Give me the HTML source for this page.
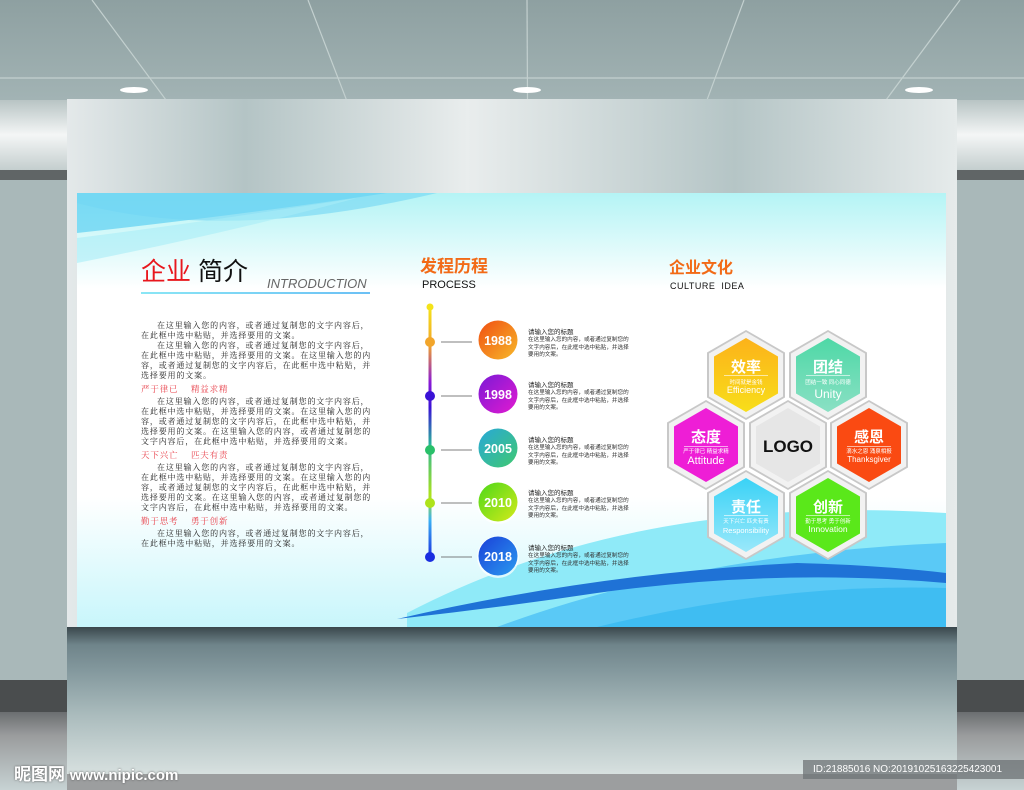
<!DOCTYPE html><html><head><meta charset="utf-8"><style>
*{margin:0;padding:0}
body{width:1024px;height:790px;overflow:hidden;position:relative;font-family:"Liberation Sans","Noto Sans CJK SC",sans-serif;background:#a7b6b7}
.abs{position:absolute}
.txt{font-family:"Liberation Sans","Noto Serif CJK SC","Noto Sans CJK SC",sans-serif;font-size:8px;letter-spacing:.85px;line-height:10px;color:#222;width:232px}
.txt p{text-indent:2em}
.red{color:#e8404a;font-size:8.5px;margin:3px 0 2px;line-height:11px}
.tl{font-size:5.6px;line-height:7.5px;color:#333;width:104px}
.tl b{font-size:6.5px;font-weight:normal;color:#222;display:block;line-height:9px}
</style></head><body>
<div class="abs" style="left:0;top:0;width:1024px;height:200px;background:linear-gradient(#8ea0a1,#a6b7b8 60%,#b9c6c6)"></div>
<svg class="abs" style="left:0;top:0" width="1024" height="790">
<g stroke="#c3d0cf" stroke-width="1.2" fill="none">
<line x1="92" y1="0" x2="240" y2="200"/><line x1="308" y1="0" x2="385" y2="200"/><line x1="527" y1="0" x2="528" y2="200"/><line x1="744" y1="0" x2="670" y2="200"/><line x1="960" y1="0" x2="812" y2="200"/>
<line x1="0" y1="110" x2="130" y2="200"/><line x1="1024" y1="118" x2="910" y2="200"/>
<line x1="0" y1="78" x2="1024" y2="78"/>
</g>
<ellipse cx="134" cy="90" rx="14" ry="3" fill="#fff"/><ellipse cx="527" cy="90" rx="14" ry="3" fill="#fff"/><ellipse cx="919" cy="90" rx="14" ry="3" fill="#fff"/>
</svg>
<div class="abs" style="left:0;top:100px;width:1024px;height:70px;background:linear-gradient(#b8c4c4,#f4f6f6 50%,#c4cece)"></div>
<div class="abs" style="left:0;top:170px;width:1024px;height:10px;background:#606566"></div>
<div class="abs" style="left:0;top:180px;width:1024px;height:500px;background:#a9b8b9"></div>
<div class="abs" style="left:0;top:680px;width:1024px;height:32px;background:#4a4d4e"></div>
<div class="abs" style="left:0;top:712px;width:1024px;height:78px;background:linear-gradient(#6b6e70,#9a9c9d 30%,#c7d2d3)"></div>
<div class="abs" style="left:67px;top:99px;width:890px;height:676px;background:linear-gradient(90deg,#e4e9ea,#b4c4c5 20%,#e9eded 45%,#b5c5c6 75%,#e6ebeb)"></div>
<div class="abs" style="left:67px;top:627px;width:890px;height:148px;background:linear-gradient(#3a474c,#6f848a 12%,#84999e 30%,#abbcbd 60%,#d8e1e0)"></div>
<div class="abs" style="left:67px;top:774px;width:890px;height:16px;background:#9c9e9f"></div>
<div class="abs" style="left:77px;top:193px;width:869px;height:434px;overflow:hidden;background:linear-gradient(#b4f4f5,#ffffff 22%,#ffffff 70%,#c8f6fb)">
<svg class="abs" style="left:0;top:0" width="869" height="434">
<path d="M0 0H310Q180 20 0 40Z" fill="#5ed0f2" opacity=".7"/>
<path d="M0 10Q150 50 360 0H0Z" fill="#72d6f4" opacity=".6"/>
<path d="M0 45Q120 30 280 5Q150 40 0 70Z" fill="#a8ecf6" opacity=".6"/>
<path d="M330 420Q560 300 869 320V434H330Z" fill="#8feaf8"/>
<path d="M420 434Q620 360 869 350V434Z" fill="#5ac9f6"/>
<path d="M320 426Q520 380 720 370Q800 372 869 380V390Q700 375 520 400Q420 415 320 426Z" fill="#1f72d6"/>
<path d="M520 434Q700 390 869 395V434Z" fill="#3fbdf2"/>
</svg>
<div class="abs" style="left:64px;top:64px;font-size:25px;line-height:30px;font-family:'Liberation Sans','Noto Sans CJK SC',sans-serif"><span style="color:#e8171d">企业</span> <span style="color:#111">简介</span></div>
<div class="abs" style="left:190px;top:83px;font-size:13px;font-style:italic;color:#666">INTRODUCTION</div>
<div class="abs" style="left:64px;top:99px;width:229px;height:2px;background:linear-gradient(90deg,#8ae6f5,#6bc0f5)"></div>
<div class="abs txt" style="left:64px;top:128px">
<p>在这里输入您的内容，或者通过复制您的文字内容后，在此框中选中粘贴，并选择要用的文案。</p>
<p>在这里输入您的内容，或者通过复制您的文字内容后，在此框中选中粘贴，并选择要用的文案。在这里输入您的内容，或者通过复制您的文字内容后，在此框中选中粘贴，并选择要用的文案。</p>
<div class="red">严于律已　 精益求精</div>
<p>在这里输入您的内容，或者通过复制您的文字内容后，在此框中选中粘贴，并选择要用的文案。在这里输入您的内容，或者通过复制您的文字内容后，在此框中选中粘贴，并选择要用的文案。在这里输入您的内容，或者通过复制您的文字内容后，在此框中选中粘贴，并选择要用的文案。</p>
<div class="red">天下兴亡　 匹夫有责</div>
<p>在这里输入您的内容，或者通过复制您的文字内容后，在此框中选中粘贴，并选择要用的文案。在这里输入您的内容，或者通过复制您的文字内容后，在此框中选中粘贴，并选择要用的文案。在这里输入您的内容，或者通过复制您的文字内容后，在此框中选中粘贴，并选择要用的文案。</p>
<div class="red">勤于思考　 勇于创新</div>
<p>在这里输入您的内容，或者通过复制您的文字内容后，在此框中选中粘贴，并选择要用的文案。</p>
</div>
<div class="abs" style="left:343px;top:59px;font-size:17px;font-weight:bold;color:#f26a16">发程历程</div>
<div class="abs" style="left:345px;top:86px;font-size:11px;color:#111">PROCESS</div>
<div class="abs" style="left:592px;top:61px;font-size:16px;font-weight:bold;color:#f26a16">企业文化</div>
<div class="abs" style="left:593px;top:88px;font-size:9px;color:#111;letter-spacing:.5px">CULTURE&nbsp; IDEA</div>
</div>
<svg class="abs" style="left:0;top:0" width="1024" height="790">
<defs>
<linearGradient id="tline" x1="0" y1="0" x2="0" y2="1"><stop offset="0" stop-color="#f4e31a"/><stop offset=".15" stop-color="#f2a52a"/><stop offset=".3" stop-color="#8a1ad6"/><stop offset=".4" stop-color="#3a12d6"/><stop offset=".55" stop-color="#2ab79a"/><stop offset=".75" stop-color="#aee31a"/><stop offset=".85" stop-color="#3ab0f4"/><stop offset="1" stop-color="#1a2ee0"/></linearGradient>
<linearGradient id="c1" x1="0" y1="0" x2="1" y2="1"><stop offset="0" stop-color="#f04e12"/><stop offset="1" stop-color="#f7b92a"/></linearGradient>
<linearGradient id="c2" x1="0" y1="0" x2="1" y2="1"><stop offset="0" stop-color="#7a1ad6"/><stop offset="1" stop-color="#e21ad0"/></linearGradient>
<linearGradient id="c3" x1="0" y1="0" x2="1" y2="1"><stop offset="0" stop-color="#28a8d8"/><stop offset="1" stop-color="#40c870"/></linearGradient>
<linearGradient id="c4" x1="0" y1="0" x2="1" y2="1"><stop offset="0" stop-color="#4cd81a"/><stop offset="1" stop-color="#d4ea1a"/></linearGradient>
<linearGradient id="c5" x1="0" y1="0" x2="1" y2="1"><stop offset="0" stop-color="#1a40d8"/><stop offset="1" stop-color="#2a9af0"/></linearGradient>
</defs>
<rect x="428.5" y="307" width="3" height="251" fill="url(#tline)"/>
<circle cx="430" cy="307" r="3.5" fill="#f4e31a"/>
<g font-family="Liberation Sans,sans-serif" font-weight="bold" font-size="12.5" fill="#fff" text-anchor="middle">
<circle cx="430" cy="342" r="5" fill="#f2a52a"/><line x1="441" y1="342" x2="472" y2="342" stroke="#555" stroke-width=".7"/>
<circle cx="498" cy="341" r="21" fill="#fff" opacity=".7"/><circle cx="498" cy="340" r="19.5" fill="url(#c1)"/><text x="498" y="345">1988</text>
<circle cx="430" cy="396" r="5" fill="#3a12d6"/><line x1="441" y1="396" x2="472" y2="396" stroke="#555" stroke-width=".7"/>
<circle cx="498" cy="395" r="21" fill="#fff" opacity=".7"/><circle cx="498" cy="394" r="19.5" fill="url(#c2)"/><text x="498" y="399">1998</text>
<circle cx="430" cy="450" r="5" fill="#2ac06a"/><line x1="441" y1="450" x2="472" y2="450" stroke="#555" stroke-width=".7"/>
<circle cx="498" cy="449" r="21" fill="#fff" opacity=".7"/><circle cx="498" cy="448" r="19.5" fill="url(#c3)"/><text x="498" y="453">2005</text>
<circle cx="430" cy="503" r="5" fill="#aee31a"/><line x1="441" y1="503" x2="472" y2="503" stroke="#555" stroke-width=".7"/>
<circle cx="498" cy="503" r="21" fill="#fff" opacity=".7"/><circle cx="498" cy="502" r="19.5" fill="url(#c4)"/><text x="498" y="507">2010</text>
<circle cx="430" cy="557" r="5" fill="#1a2ee0"/><line x1="441" y1="557" x2="472" y2="557" stroke="#555" stroke-width=".7"/>
<circle cx="498" cy="557" r="21" fill="#fff" opacity=".7"/><circle cx="498" cy="556" r="19.5" fill="url(#c5)"/><text x="498" y="561">2018</text>
</g>
</svg>
<div class="abs tl" style="left:528px;top:328px"><b>请输入您的标题</b>在这里输入您的内容，或者通过复制您的文字内容后，在此框中选中粘贴，并选择要用的文案。</div>
<div class="abs tl" style="left:528px;top:381px"><b>请输入您的标题</b>在这里输入您的内容，或者通过复制您的文字内容后，在此框中选中粘贴，并选择要用的文案。</div>
<div class="abs tl" style="left:528px;top:436px"><b>请输入您的标题</b>在这里输入您的内容，或者通过复制您的文字内容后，在此框中选中粘贴，并选择要用的文案。</div>
<div class="abs tl" style="left:528px;top:489px"><b>请输入您的标题</b>在这里输入您的内容，或者通过复制您的文字内容后，在此框中选中粘贴，并选择要用的文案。</div>
<div class="abs tl" style="left:528px;top:544px"><b>请输入您的标题</b>在这里输入您的内容，或者通过复制您的文字内容后，在此框中选中粘贴，并选择要用的文案。</div>
<svg class="abs" style="left:0;top:0" width="1024" height="790" font-family="Liberation Sans,Noto Sans CJK SC,sans-serif" text-anchor="middle">
<defs>
<symbol id="hx" viewBox="-40 -45 80 90"><polygon points="0,-45 39,-22.5 39,22.5 0,45 -39,22.5 -39,-22.5" fill="#c8c8c8"/><polygon points="0,-43 37,-21.5 37,21.5 0,43 -37,21.5 -37,-21.5" fill="#f2f2f2"/></symbol>
<linearGradient id="h1" x1="0" y1="0" x2="0" y2="1"><stop offset="0" stop-color="#fcb21a"/><stop offset="1" stop-color="#f8de1a"/></linearGradient>
<linearGradient id="h2" x1="0" y1="0" x2="0" y2="1"><stop offset="0" stop-color="#4ed8a6"/><stop offset="1" stop-color="#8ae0c4"/></linearGradient>
<linearGradient id="h5" x1="0" y1="0" x2="0" y2="1"><stop offset="0" stop-color="#3ad2f6"/><stop offset="1" stop-color="#9ae8fa"/></linearGradient>
</defs>
<use href="#hx" x="706" y="330" width="80" height="90"/><polygon points="746,338 778,356.5 778,393.5 746,412 714,393.5 714,356.5" fill="url(#h1)"/>
<use href="#hx" x="788" y="330" width="80" height="90"/><polygon points="828,338 860,356.5 860,393.5 828,412 796,393.5 796,356.5" fill="url(#h2)"/>
<use href="#hx" x="666" y="400" width="80" height="90"/><polygon points="706,408 738,426.5 738,463.5 706,482 674,463.5 674,426.5" fill="#ee1ed6"/>
<use href="#hx" x="748" y="400" width="80" height="90"/><polygon points="788,408 820,426.5 820,463.5 788,482 756,463.5 756,426.5" fill="#e6e6e6"/>
<use href="#hx" x="829" y="400" width="80" height="90"/><polygon points="869,408 901,426.5 901,463.5 869,482 837,463.5 837,426.5" fill="#fa4a12"/>
<use href="#hx" x="706" y="470" width="80" height="90"/><polygon points="746,478 778,496.5 778,533.5 746,552 714,533.5 714,496.5" fill="url(#h5)"/>
<use href="#hx" x="788" y="470" width="80" height="90"/><polygon points="828,478 860,496.5 860,533.5 828,552 796,533.5 796,496.5" fill="#5ae81a"/>
<g fill="#fff">
<text x="746" y="372" font-size="15" font-weight="bold">效率</text><rect x="724" y="375" width="44" height=".6"/><text x="746" y="384" font-size="5.5">时间就是金钱</text><text x="746" y="393" font-size="9">Efficiency</text>
<text x="828" y="372" font-size="15" font-weight="bold">团结</text><rect x="806" y="375" width="44" height=".6"/><text x="828" y="384" font-size="5.5">团结一致 同心同德</text><text x="828" y="398" font-size="12">Unity</text>
<text x="706" y="442" font-size="15" font-weight="bold">态度</text><rect x="684" y="446" width="44" height=".6"/><text x="706" y="453" font-size="5.5">严于律已 精益求精</text><text x="706" y="464" font-size="11">Attitude</text>
<text x="869" y="442" font-size="15" font-weight="bold">感恩</text><rect x="847" y="446" width="44" height=".6"/><text x="869" y="453" font-size="5.5">滴水之恩 涌泉相报</text><text x="869" y="462" font-size="8">Thanksgiver</text>
<text x="746" y="512" font-size="15" font-weight="bold">责任</text><rect x="724" y="515" width="44" height=".6"/><text x="746" y="523" font-size="5.5">天下兴亡 匹夫有责</text><text x="746" y="533" font-size="7.5">Responsibility</text>
<text x="828" y="512" font-size="15" font-weight="bold">创新</text><rect x="806" y="515" width="44" height=".6"/><text x="828" y="523" font-size="5.5">勤于思考 勇于创新</text><text x="828" y="532" font-size="8.5">Innovation</text>
</g>
<text x="788" y="452" font-size="17" font-weight="bold" fill="#111">LOGO</text>
</svg>
<div class="abs" style="left:14px;top:760px;font-size:17px;font-weight:bold;color:#fff;text-shadow:0 0 2px #555">昵图网 <span style="font-size:15px">www.nipic.com</span></div>
<div class="abs" style="left:803px;top:760px;width:232px;height:19px;background:rgba(110,115,118,.75);color:#fff;font-size:10px;line-height:19px;padding-left:10px">ID:21885016 NO:20191025163225423001</div>
</body></html>
